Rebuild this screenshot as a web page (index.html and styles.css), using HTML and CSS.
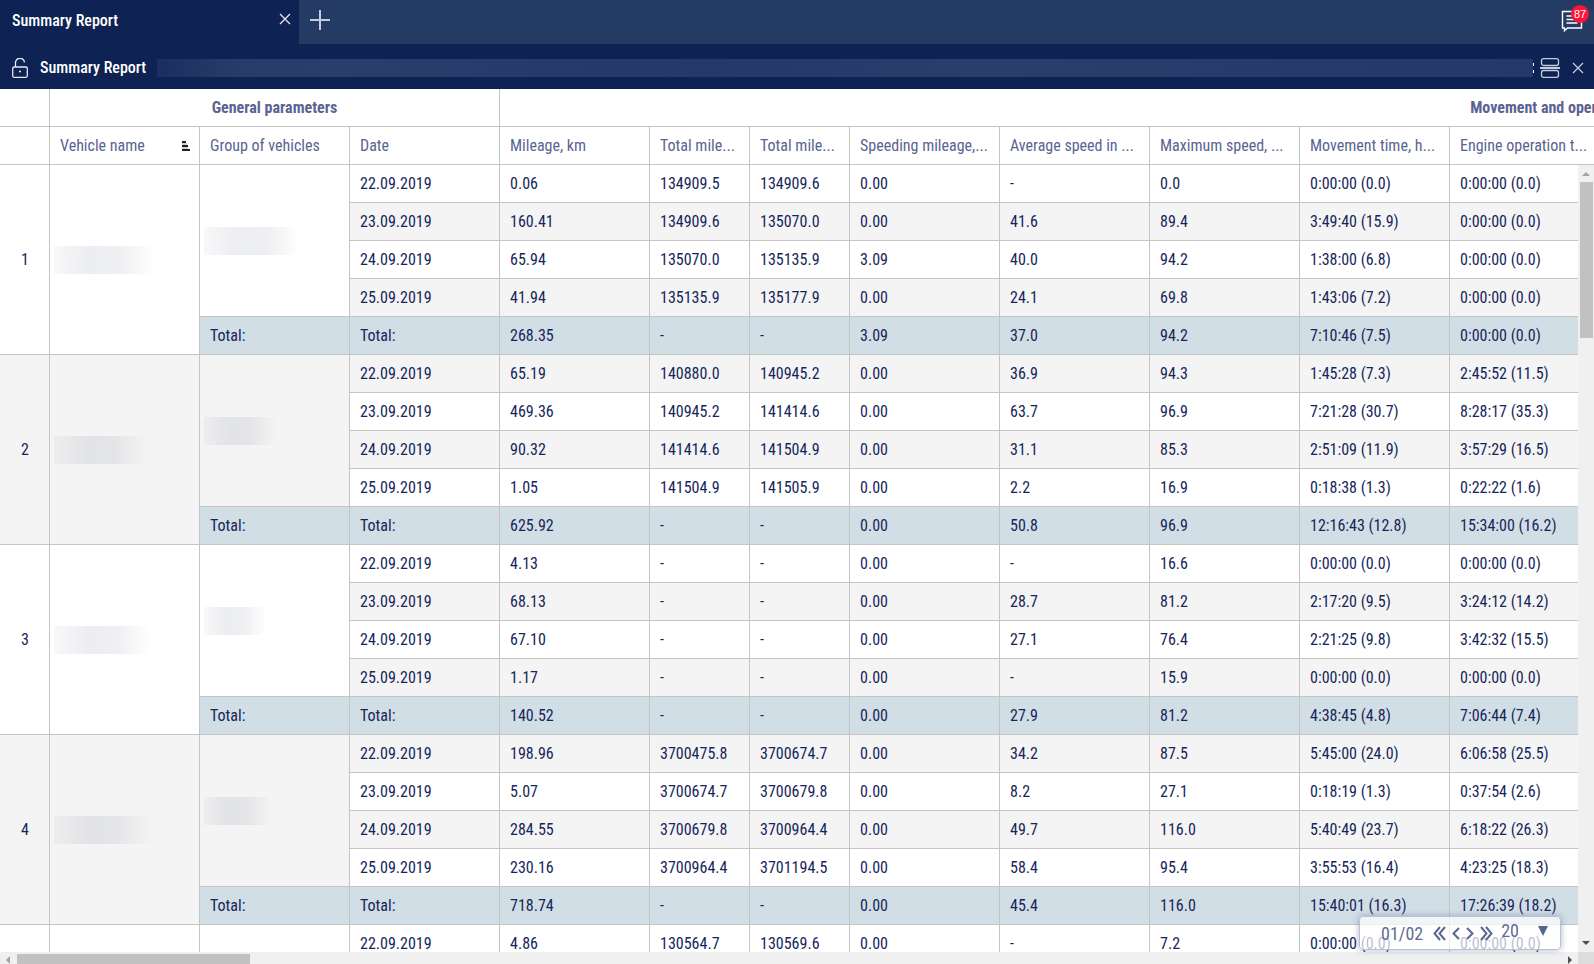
FILE: index.html
```html
<!DOCTYPE html>
<html lang="en">
<head>
<meta charset="utf-8">
<title>Summary Report</title>
<link rel="stylesheet" href="styles.css">
</head>
<body>
<div class="app">
  <nav class="tabs" aria-label="Open reports">
    <div class="tab">
      <span class="tab-title">Summary Report</span>
      <button class="icon-btn close-tab" type="button" aria-label="Close tab">
        <svg width="12" height="12" viewBox="0 0 12 12"><path d="M1 1l10 10M11 1L1 11" stroke="#e6eaf2" stroke-width="1.3" fill="none"/></svg>
      </button>
    </div>
    <button class="icon-btn add" type="button" aria-label="New tab">
      <svg width="20" height="20" viewBox="0 0 20 20"><path d="M10 0v20M0 10h20" stroke="#c5ccda" stroke-width="2" fill="none"/></svg>
    </button>
    <button class="icon-btn messages" type="button" aria-label="Messages">
      <svg width="22" height="22" viewBox="0 0 22 22" fill="none" stroke="#fff" stroke-width="1.4"><path d="M1.5 1.5h19v16.500h-14l-3 2.700v-2.700h-2z"/><path d="M5.500 6h11M5.500 9.500h11M5.500 13h11"/></svg>
      <span class="badge">87</span>
    </button>
  </nav>

  <header class="report-bar">
    <button class="icon-btn lock" type="button" aria-label="Lock report">
      <svg width="16" height="20" viewBox="0 0 16 20" fill="none" stroke="#e6eaf2" stroke-width="1.3"><rect x="0.700" y="9" width="14.600" height="10.300" rx="1.500"/><path d="M3.500 9V5.200a4.500 4.500 0 0 1 9-.8"/><path d="M7 13.500h2" stroke-width="1.600"/></svg>
    </button>
    <h1 class="report-title">Summary Report</h1>
    <div class="redacted-bar"></div>
    <span class="bar-tail"></span>
    <button class="icon-btn split" type="button" aria-label="Split view">
      <svg width="20" height="20" viewBox="0 0 20 20" fill="none" stroke="#c5ccda" stroke-width="1.300"><rect x="1.500" y="0.700" width="17" height="6.800" rx="2"/><path d="M0 10h20" stroke-width="2"/><rect x="1.500" y="12.500" width="17" height="6.800" rx="2"/></svg>
    </button>
    <button class="icon-btn" type="button" aria-label="Close report">
      <svg width="12" height="12" viewBox="0 0 12 12"><path d="M1 1l10 10M11 1L1 11" stroke="#c5ccda" stroke-width="1.300" fill="none"/></svg>
    </button>
  </header>

  <main class="grid">
    <div class="grid-view">
      <table class="report">
        <colgroup>
          <col class="w-num"><col class="w-m"><col class="w-m"><col class="w-m"><col class="w-m"><col class="w-s"><col class="w-s">
          <col class="w-m"><col class="w-m"><col class="w-m"><col class="w-m"><col class="w-m"><col class="w-rest">
        </colgroup>
        <thead>
          <tr class="groups"><th></th><th colspan="3">General parameters</th><th colspan="9">Movement and operation</th></tr>
          <tr>
            <th></th>
            <th><div class="sortable">Vehicle name
              <svg width="8" height="10" viewBox="0 0 8 10"><path d="M0 1h4M0 5h6M0 9h8" stroke="#1f1f1f" stroke-width="2"/><path d="M0 3h5M0 7h6" stroke="#9a9a9a" stroke-width="1"/></svg></div></th>
            <th>Group of vehicles</th><th>Date</th><th>Mileage, km</th>
            <th>Total mile...</th><th>Total mile...</th>
            <th>Speeding mileage,...</th><th>Average speed in ...</th><th>Maximum speed, ...</th>
            <th>Movement time, h...</th><th>Engine operation t...</th><th></th>
          </tr>
        </thead>
        <tbody id="rows"></tbody>
      </table>
    </div>
    <div class="vscroll"><i class="arrow up"></i><i class="vthumb"></i><i class="arrow down"></i></div>
    <form class="pager">
      <span class="page">01/02</span>
      <button class="icon-btn" type="button" aria-label="First page"><svg width="13" height="15" viewBox="0 0 13 15"><path d="M7 1L1.500 7.500L7 14M12 1L6.500 7.500L12 14"/></svg></button>
      <button class="icon-btn" type="button" aria-label="Previous page"><svg width="8" height="13" viewBox="0 0 8 13"><path d="M7 1L1.500 6.500L7 12"/></svg></button>
      <button class="icon-btn" type="button" aria-label="Next page"><svg width="8" height="13" viewBox="0 0 8 13"><path d="M1 1l5.500 5.500L1 12"/></svg></button>
      <button class="icon-btn" type="button" aria-label="Last page"><svg width="13" height="15" viewBox="0 0 13 15"><path d="M1 1l5.500 6.500L1 14M6 1l5.500 6.500L6 14"/></svg></button>
      <label class="size"><select aria-label="Rows per page"><option>20</option><option>50</option></select><i class="caret"></i></label>
    </form>
  </main>
  <div class="hscroll"><i class="arrow left"></i><i class="hthumb"></i><i class="arrow right"></i><i class="corner"></i></div>
</div>
<script src="rows.js"></script>
</body>
</html>
```
FILE: rows.js
```js
const vehicles = [
  ["22.09.2019|0.06|134909.5|134909.6|0.00|-|0.0|0:00:00 (0.0)|0:00:00 (0.0)",
   "23.09.2019|160.41|134909.6|135070.0|0.00|41.6|89.4|3:49:40 (15.9)|0:00:00 (0.0)",
   "24.09.2019|65.94|135070.0|135135.9|3.09|40.0|94.2|1:38:00 (6.8)|0:00:00 (0.0)",
   "25.09.2019|41.94|135135.9|135177.9|0.00|24.1|69.8|1:43:06 (7.2)|0:00:00 (0.0)",
   "Total:|268.35|-|-|3.09|37.0|94.2|7:10:46 (7.5)|0:00:00 (0.0)"],
  ["22.09.2019|65.19|140880.0|140945.2|0.00|36.9|94.3|1:45:28 (7.3)|2:45:52 (11.5)",
   "23.09.2019|469.36|140945.2|141414.6|0.00|63.7|96.9|7:21:28 (30.7)|8:28:17 (35.3)",
   "24.09.2019|90.32|141414.6|141504.9|0.00|31.1|85.3|2:51:09 (11.9)|3:57:29 (16.5)",
   "25.09.2019|1.05|141504.9|141505.9|0.00|2.2|16.9|0:18:38 (1.3)|0:22:22 (1.6)",
   "Total:|625.92|-|-|0.00|50.8|96.9|12:16:43 (12.8)|15:34:00 (16.2)"],
  ["22.09.2019|4.13|-|-|0.00|-|16.6|0:00:00 (0.0)|0:00:00 (0.0)",
   "23.09.2019|68.13|-|-|0.00|28.7|81.2|2:17:20 (9.5)|3:24:12 (14.2)",
   "24.09.2019|67.10|-|-|0.00|27.1|76.4|2:21:25 (9.8)|3:42:32 (15.5)",
   "25.09.2019|1.17|-|-|0.00|-|15.9|0:00:00 (0.0)|0:00:00 (0.0)",
   "Total:|140.52|-|-|0.00|27.9|81.2|4:38:45 (4.8)|7:06:44 (7.4)"],
  ["22.09.2019|198.96|3700475.8|3700674.7|0.00|34.2|87.5|5:45:00 (24.0)|6:06:58 (25.5)",
   "23.09.2019|5.07|3700674.7|3700679.8|0.00|8.2|27.1|0:18:19 (1.3)|0:37:54 (2.6)",
   "24.09.2019|284.55|3700679.8|3700964.4|0.00|49.7|116.0|5:40:49 (23.7)|6:18:22 (26.3)",
   "25.09.2019|230.16|3700964.4|3701194.5|0.00|58.4|95.4|3:55:53 (16.4)|4:23:25 (18.3)",
   "Total:|718.74|-|-|0.00|45.4|116.0|15:40:01 (16.3)|17:26:39 (18.2)"],
  ["22.09.2019|4.86|130564.7|130569.6|0.00|-|7.2|0:00:00 (0.0)|0:00:00 (0.0)"]
];
const widths = [[100, 96], [94, 72], [96, 62], [98, 68]];

let html = "";
let index = 0;
vehicles.forEach((days, v) => {
  const shade = v % 2 ? "alt" : "";
  days.forEach((day, d) => {
    const total = day.startsWith("Total");
    html += `<tr class="${total ? "total" : index % 2 ? "alt" : ""}">`;
    if (d === 0) {
      const spot = k => widths[v] ? `<div class="hidden-name" style="width:${widths[v][k]}px"></div>` : "";
      html += `<th class="num ${shade}" rowspan="${days.length}">${widths[v] ? v + 1 : ""}</th>`;
      html += `<td class="name ${shade}" rowspan="${days.length}">${spot(0)}</td>`;
      html += `<td class="name ${shade}" rowspan="${Math.max(days.length - 1, 1)}">${spot(1)}</td>`;
    }
    if (total) html += "<td>Total:</td>";
    html += day.split("|").map(t => `<td>${t}</td>`).join("") + "<td></td></tr>";
    index++;
  });
});
document.getElementById("rows").innerHTML = html;
```
FILE: styles.css
```css
* { box-sizing: border-box; }
body {
  margin: 0;
  font: 16px/20px "Roboto Condensed", Roboto, sans-serif;
  color: #16265a;
  background: #fff;
}
.app { display: flex; flex-direction: column; height: 100vh; overflow: hidden; }

.icon-btn {
  display: flex;
  align-items: center;
  justify-content: center;
  padding: 0;
  border: 0;
  background: none;
  cursor: pointer;
}

/* tab strip */
.tabs { display: flex; flex: none; height: 44px; background: #243b64; }
.tab {
  display: flex;
  align-items: center;
  justify-content: space-between;
  width: 299px;
  padding: 0 8px 2px 12px;
  background: #0e2353;
  color: #fff;
}
.tab-title, .report-title { font-size: 16px; font-weight: 500; }
.close-tab { padding-bottom: 4px; }
.add { width: 42px; padding-bottom: 4px; }
.messages { position: relative; margin-left: auto; width: 22px; margin-right: 11px; padding-bottom: 3px; }
.badge {
  position: absolute;
  top: 5px;
  right: -6px;
  width: 18px;
  height: 18px;
  border-radius: 50%;
  background: #ff1438;
  color: #fff;
  font-size: 11px;
  line-height: 18px;
  font-weight: 500;
  text-align: center;
}

/* report title bar */
.report-bar {
  display: flex;
  flex: none;
  align-items: center;
  height: 45px;
  padding: 3px 10px 0 12px;
  background: #0e2353;
  color: #fff;
}
.report-title { margin: 0 11px 0 12px; white-space: nowrap; }
.redacted-bar {
  flex: 1;
  height: 18px;
  background: linear-gradient(90deg, #1b2f5f, #293c69 6%, #2b3e6b 12%, #24386a 40%, #2b3e6b 60%, #24386a);
}
.bar-tail { width: 1px; height: 10px; margin-right: 6px; border: solid #fff; border-width: 3px 0; }
.split { margin-right: 12px; }

/* table */
.grid { position: relative; flex: 1; min-height: 0; }
.grid-view { height: 100%; overflow: hidden; }
.report { width: 2600px; table-layout: fixed; border-collapse: separate; border-spacing: 0; }
.w-num { width: 50px; }
.w-s { width: 100px; }
.w-m { width: 150px; }
.w-rest { width: 1000px; }
.report th, .report td {
  height: 38px;
  padding: 0 4px 0 10px;
  border: solid #c4c4c4;
  border-width: 0 1px 1px 0;
  overflow: hidden;
  text-align: left;
  white-space: nowrap;
}
.report thead th { color: #5a6492; font-weight: 400; }
.report .groups th { padding: 0 4px 0 4px; font-weight: 700; text-align: center; }
.report .num { padding: 0 0 0 1px; font-weight: 400; text-align: center; }
.alt { background: #f4f4f4; }
.report tr:not(.alt) > .name:not(.alt), .report .num:not(.alt) { background: #fff; }
.total { background: #d2dee6; }
.sortable { display: flex; align-items: center; justify-content: space-between; padding-right: 5px; }
.report .name { padding: 0 0 0 4px; }
.hidden-name {
  height: 28px;
  background: linear-gradient(90deg, rgba(20, 30, 70, 0.03), rgba(20, 30, 70, 0.08) 35%, rgba(20, 30, 70, 0.07) 65%, rgba(20, 30, 70, 0));
}

/* scrollbars */
.vscroll {
  position: absolute;
  top: 76px;
  right: 0;
  bottom: 0;
  display: flex;
  flex-direction: column;
  align-items: center;
  width: 16px;
  padding: 7px 0;
  background: #f0f0f0;
}
.vthumb { width: 13px; height: 156px; margin: 6px 0 auto; background: #c1c1c1; }
.hscroll { display: flex; flex: none; align-items: center; height: 12px; padding-left: 6px; background: #f0f0f0; overflow: hidden; }
.hthumb { align-self: flex-end; width: 233px; height: 10px; margin: 0 auto 0 7px; background: #c1c1c1; }
.corner { width: 16px; height: 12px; margin-left: 6px; background: #dcdcdc; }
.arrow { flex: none; width: 0; height: 0; border: 4px solid transparent; }
.up { border-top: 0; border-bottom-color: #a3a3a3; }
.down { border-bottom: 0; border-top-color: #505050; }
.left { border-left: 0; border-right-color: #a3a3a3; margin-top: 4px; }
.right { border-right: 0; border-left-color: #505050; margin-top: 4px; }

/* floating pager */
.pager {
  position: absolute;
  right: 33px;
  bottom: 2px;
  display: flex;
  align-items: center;
  gap: 6px;
  width: 202px;
  height: 34px;
  padding: 1px 12px 0 21px;
  border: 1px solid #b9c3d6;
  border-radius: 4px;
  background: rgba(255, 255, 255, 0.7);
  box-shadow: 0 0 6px rgba(30, 50, 110, 0.35);
  color: #5f6d93;
  font-size: 18px;
}
.page { margin-right: 4px; }
.pager svg { fill: none; stroke: #5a6890; stroke-width: 2; }
.size { display: flex; align-items: center; justify-content: space-between; flex: 1; margin: 0 0 5px 2px; }
.size select {
  appearance: none;
  width: 24px;
  padding: 0;
  border: 0;
  background: none;
  color: inherit;
  font: inherit;
}
.caret { border: 5px solid transparent; border-top: 10px solid #56648e; border-bottom: 0; }
```
